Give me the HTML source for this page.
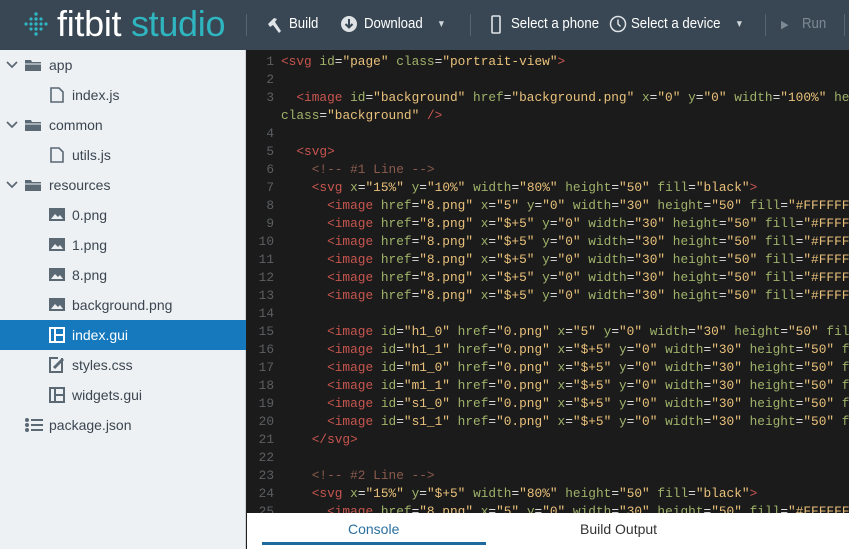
<!DOCTYPE html>
<html><head><meta charset="utf-8"><style>
*{margin:0;padding:0;box-sizing:border-box}
body{width:849px;height:549px;overflow:hidden;background:#1e1e1e;font-family:"Liberation Sans",sans-serif;position:relative}
#hdr{position:absolute;left:0;top:0;width:849px;height:50px;background:#384753;color:#fff}
.logo{position:absolute;left:57px;top:4px;font-size:36px;line-height:40px;letter-spacing:-0.3px}
.logo span{color:#2fb5c0}
.hi{position:absolute;top:15px;font-size:15px;color:#fff;white-space:nowrap;transform:scaleX(0.88);transform-origin:left center}
.sep{position:absolute;top:14px;width:1px;height:22px;background:#56656f}
#side{position:absolute;left:0;top:50px;width:246px;height:499px;background:#eef1f4;border-right:1px solid #cdd3d8}
.row{position:absolute;left:0;width:246px;height:30px;font-size:14px;color:#3b4650;line-height:30px}
.row.sel{background:#1679bd;color:#fff}
.row svg{position:absolute;top:7px}
#ed{position:absolute;left:247px;top:50px;width:602px;height:463px;background:#1b1b1b;font-family:"Liberation Mono",monospace;font-size:12.8px;overflow:hidden;padding-top:3px}
.l{height:18px;line-height:18px;white-space:pre;position:relative}
.n{display:inline-block;width:27px;text-align:right;color:#5c5f62;margin-right:7px}
.t{color:#c8554f}.a{color:#9fb36a}.s{color:#e9c17a}.c{color:#8a5b4d}.p{color:#ddd}
#bot{position:absolute;left:247px;top:513px;width:602px;height:36px;background:#fff;font-size:14px;color:#333}
</style></head><body>
<div id="hdr">
<svg style="position:absolute;left:22px;top:10px" width="30" height="30" viewBox="0 0 30 30" fill="#2fb5c0">
<circle cx="4" cy="14" r="1.6"/>
<circle cx="9" cy="9" r="1.6"/><circle cx="9" cy="14" r="1.6"/><circle cx="9" cy="19" r="1.6"/>
<circle cx="14" cy="4" r="1.7"/><circle cx="14" cy="9" r="1.7"/><circle cx="14" cy="14" r="1.7"/><circle cx="14" cy="19" r="1.7"/><circle cx="14" cy="24" r="1.7"/>
<circle cx="19" cy="9" r="1.6"/><circle cx="19" cy="14" r="1.6"/><circle cx="19" cy="19" r="1.6"/>
<circle cx="24" cy="14" r="1.6"/>
</svg>
<div class="logo">fitbit <span>studio</span></div>
<div class="sep" style="left:246px"></div>
<svg style="position:absolute;left:265px;top:16px" width="18" height="18" viewBox="0 0 18 18" fill="#dfe3e6"><path d="M3 8 L9 2 L12 3 L10 6 L16 15 L14 17 L8 9 L5 11 Z"/></svg>
<div class="hi" style="left:289px">Build</div>
<svg style="position:absolute;left:340px;top:15px" width="18" height="18" viewBox="0 0 18 18"><circle cx="9" cy="9" r="8" fill="#dfe3e6"/><path d="M9 4 V12 M5.5 9 L9 12.5 L12.5 9" stroke="#384753" stroke-width="2" fill="none"/></svg>
<div class="hi" style="left:364px">Download</div>
<div class="hi" style="left:437px;font-size:10px;top:19px;color:#cfd5d9">▼</div>
<div class="sep" style="left:470px"></div>
<svg style="position:absolute;left:491px;top:15px" width="10" height="19" viewBox="0 0 10 19"><rect x="1" y="1" width="8" height="17" rx="1" fill="none" stroke="#dfe3e6" stroke-width="1.6"/></svg>
<div class="hi" style="left:511px">Select a phone</div>
<svg style="position:absolute;left:609px;top:15px" width="18" height="18" viewBox="0 0 18 18"><circle cx="9" cy="9" r="7.5" fill="none" stroke="#dfe3e6" stroke-width="1.5"/><path d="M9 4.5 V9 L11.5 11.5" stroke="#dfe3e6" stroke-width="1.5" fill="none"/></svg>
<div class="hi" style="left:631px">Select a device</div>
<div class="hi" style="left:735px;font-size:10px;top:19px;color:#cfd5d9">▼</div>
<div class="sep" style="left:765px"></div>
<div class="hi" style="left:781px;color:#7d8a94;font-size:11px;top:18px">▶</div>
<div class="hi" style="left:802px;color:#7d8a94">Run</div>
<div class="sep" style="left:844px"></div>
</div>

<div id="side">
<div class="row" style="top:0"><svg style="left:6px;top:11px" width="12" height="8"><path d="M1 1 L6 6 L11 1" stroke="#5b6975" stroke-width="1.8" fill="none"/></svg><svg style="left:25px;top:9px" width="17" height="13"><path d="M0 1 H6 L7 3 H16 V12 H0 Z" fill="#5b6975"/><path d="M0 5 H16" stroke="#eef1f4" stroke-width="1"/></svg><span style="position:absolute;left:49px">app</span></div>
<div class="row" style="top:30px"><svg style="left:50px" width="14" height="16"><path d="M1 1 H9 L13 5 V15 H1 Z" fill="none" stroke="#5b6975" stroke-width="1.6"/></svg><span style="position:absolute;left:72px">index.js</span></div>
<div class="row" style="top:60px"><svg style="left:6px;top:11px" width="12" height="8"><path d="M1 1 L6 6 L11 1" stroke="#5b6975" stroke-width="1.8" fill="none"/></svg><svg style="left:25px;top:9px" width="17" height="13"><path d="M0 1 H6 L7 3 H16 V12 H0 Z" fill="#5b6975"/><path d="M0 5 H16" stroke="#eef1f4" stroke-width="1"/></svg><span style="position:absolute;left:49px">common</span></div>
<div class="row" style="top:90px"><svg style="left:50px" width="14" height="16"><path d="M1 1 H9 L13 5 V15 H1 Z" fill="none" stroke="#5b6975" stroke-width="1.6"/></svg><span style="position:absolute;left:72px">utils.js</span></div>
<div class="row" style="top:120px"><svg style="left:6px;top:11px" width="12" height="8"><path d="M1 1 L6 6 L11 1" stroke="#5b6975" stroke-width="1.8" fill="none"/></svg><svg style="left:25px;top:9px" width="17" height="13"><path d="M0 1 H6 L7 3 H16 V12 H0 Z" fill="#5b6975"/><path d="M0 5 H16" stroke="#eef1f4" stroke-width="1"/></svg><span style="position:absolute;left:49px">resources</span></div>
<div class="row" style="top:150px"><svg style="left:49px;top:8px" width="16" height="13"><rect width="16" height="13" fill="#5b6975"/><path d="M2 11 L6 6 L9 9 L11 7 L14 11 Z" fill="#eef1f4"/></svg><span style="position:absolute;left:72px">0.png</span></div>
<div class="row" style="top:180px"><svg style="left:49px;top:8px" width="16" height="13"><rect width="16" height="13" fill="#5b6975"/><path d="M2 11 L6 6 L9 9 L11 7 L14 11 Z" fill="#eef1f4"/></svg><span style="position:absolute;left:72px">1.png</span></div>
<div class="row" style="top:210px"><svg style="left:49px;top:8px" width="16" height="13"><rect width="16" height="13" fill="#5b6975"/><path d="M2 11 L6 6 L9 9 L11 7 L14 11 Z" fill="#eef1f4"/></svg><span style="position:absolute;left:72px">8.png</span></div>
<div class="row" style="top:240px"><svg style="left:49px;top:8px" width="16" height="13"><rect width="16" height="13" fill="#5b6975"/><path d="M2 11 L6 6 L9 9 L11 7 L14 11 Z" fill="#eef1f4"/></svg><span style="position:absolute;left:72px">background.png</span></div>
<div class="row sel" style="top:270px"><svg style="left:49px" width="16" height="16"><rect x="1" y="1" width="14" height="14" fill="none" stroke="#fff" stroke-width="2"/><path d="M6 1 V15 M6 8 H15" stroke="#fff" stroke-width="2"/></svg><span style="position:absolute;left:72px">index.gui</span></div>
<div class="row" style="top:300px"><svg style="left:49px" width="16" height="16"><path d="M13 1 V15 H1 V1 H9" fill="none" stroke="#5b6975" stroke-width="2"/><path d="M5 11 L14 2" stroke="#5b6975" stroke-width="3"/></svg><span style="position:absolute;left:72px">styles.css</span></div>
<div class="row" style="top:330px"><svg style="left:49px" width="16" height="16"><rect x="1" y="1" width="14" height="14" fill="none" stroke="#5b6975" stroke-width="2"/><path d="M6 1 V15 M6 8 H15" stroke="#5b6975" stroke-width="2"/></svg><span style="position:absolute;left:72px">widgets.gui</span></div>
<div class="row" style="top:360px"><svg style="left:25px;top:8px" width="18" height="14" fill="#5b6975"><circle cx="2" cy="2" r="2"/><circle cx="2" cy="7" r="2"/><circle cx="2" cy="12" r="2"/><rect x="6" y="1" width="12" height="2"/><rect x="6" y="6" width="12" height="2"/><rect x="6" y="11" width="12" height="2"/></svg><span style="position:absolute;left:49px">package.json</span></div>
</div>

<div id="ed">
<div class="l"><span class="n">1</span><span class="t">&lt;svg</span> <span class="a">id</span><span class="p">=</span><span class="s">"page"</span> <span class="a">class</span><span class="p">=</span><span class="s">"portrait-view"</span><span class="t">&gt;</span></div>
<div class="l"><span class="n">2</span></div>
<div class="l"><span class="n">3</span>  <span class="t">&lt;image</span> <span class="a">id</span><span class="p">=</span><span class="s">"background"</span> <span class="a">href</span><span class="p">=</span><span class="s">"background.png"</span> <span class="a">x</span><span class="p">=</span><span class="s">"0"</span> <span class="a">y</span><span class="p">=</span><span class="s">"0"</span> <span class="a">width</span><span class="p">=</span><span class="s">"100%"</span> <span class="a">height</span><span class="p">=</span><span class="s">"100%"</span></div>
<div class="l"><span class="n"></span><span class="a">class</span><span class="p">=</span><span class="s">"background"</span> <span class="t">/&gt;</span></div>
<div class="l"><span class="n">4</span></div>
<div class="l"><span class="n">5</span>  <span class="t">&lt;svg&gt;</span></div>
<div class="l"><span class="n">6</span>    <span class="c">&lt;!-- #1 Line --&gt;</span></div>
<div class="l"><span class="n">7</span>    <span class="t">&lt;svg</span> <span class="a">x</span><span class="p">=</span><span class="s">"15%"</span> <span class="a">y</span><span class="p">=</span><span class="s">"10%"</span> <span class="a">width</span><span class="p">=</span><span class="s">"80%"</span> <span class="a">height</span><span class="p">=</span><span class="s">"50"</span> <span class="a">fill</span><span class="p">=</span><span class="s">"black"</span><span class="t">&gt;</span></div>
<div class="l"><span class="n">8</span>      <span class="t">&lt;image</span> <span class="a">href</span><span class="p">=</span><span class="s">"8.png"</span> <span class="a">x</span><span class="p">=</span><span class="s">"5"</span> <span class="a">y</span><span class="p">=</span><span class="s">"0"</span> <span class="a">width</span><span class="p">=</span><span class="s">"30"</span> <span class="a">height</span><span class="p">=</span><span class="s">"50"</span> <span class="a">fill</span><span class="p">=</span><span class="s">"#FFFFFF"</span></div>
<div class="l"><span class="n">9</span>      <span class="t">&lt;image</span> <span class="a">href</span><span class="p">=</span><span class="s">"8.png"</span> <span class="a">x</span><span class="p">=</span><span class="s">"$+5"</span> <span class="a">y</span><span class="p">=</span><span class="s">"0"</span> <span class="a">width</span><span class="p">=</span><span class="s">"30"</span> <span class="a">height</span><span class="p">=</span><span class="s">"50"</span> <span class="a">fill</span><span class="p">=</span><span class="s">"#FFFFFF"</span></div>
<div class="l"><span class="n">10</span>      <span class="t">&lt;image</span> <span class="a">href</span><span class="p">=</span><span class="s">"8.png"</span> <span class="a">x</span><span class="p">=</span><span class="s">"$+5"</span> <span class="a">y</span><span class="p">=</span><span class="s">"0"</span> <span class="a">width</span><span class="p">=</span><span class="s">"30"</span> <span class="a">height</span><span class="p">=</span><span class="s">"50"</span> <span class="a">fill</span><span class="p">=</span><span class="s">"#FFFFFF"</span></div>
<div class="l"><span class="n">11</span>      <span class="t">&lt;image</span> <span class="a">href</span><span class="p">=</span><span class="s">"8.png"</span> <span class="a">x</span><span class="p">=</span><span class="s">"$+5"</span> <span class="a">y</span><span class="p">=</span><span class="s">"0"</span> <span class="a">width</span><span class="p">=</span><span class="s">"30"</span> <span class="a">height</span><span class="p">=</span><span class="s">"50"</span> <span class="a">fill</span><span class="p">=</span><span class="s">"#FFFFFF"</span></div>
<div class="l"><span class="n">12</span>      <span class="t">&lt;image</span> <span class="a">href</span><span class="p">=</span><span class="s">"8.png"</span> <span class="a">x</span><span class="p">=</span><span class="s">"$+5"</span> <span class="a">y</span><span class="p">=</span><span class="s">"0"</span> <span class="a">width</span><span class="p">=</span><span class="s">"30"</span> <span class="a">height</span><span class="p">=</span><span class="s">"50"</span> <span class="a">fill</span><span class="p">=</span><span class="s">"#FFFFFF"</span></div>
<div class="l"><span class="n">13</span>      <span class="t">&lt;image</span> <span class="a">href</span><span class="p">=</span><span class="s">"8.png"</span> <span class="a">x</span><span class="p">=</span><span class="s">"$+5"</span> <span class="a">y</span><span class="p">=</span><span class="s">"0"</span> <span class="a">width</span><span class="p">=</span><span class="s">"30"</span> <span class="a">height</span><span class="p">=</span><span class="s">"50"</span> <span class="a">fill</span><span class="p">=</span><span class="s">"#FFFFFF"</span></div>
<div class="l"><span class="n">14</span></div>
<div class="l"><span class="n">15</span>      <span class="t">&lt;image</span> <span class="a">id</span><span class="p">=</span><span class="s">"h1_0"</span> <span class="a">href</span><span class="p">=</span><span class="s">"0.png"</span> <span class="a">x</span><span class="p">=</span><span class="s">"5"</span> <span class="a">y</span><span class="p">=</span><span class="s">"0"</span> <span class="a">width</span><span class="p">=</span><span class="s">"30"</span> <span class="a">height</span><span class="p">=</span><span class="s">"50"</span> <span class="a">fill</span></div>
<div class="l"><span class="n">16</span>      <span class="t">&lt;image</span> <span class="a">id</span><span class="p">=</span><span class="s">"h1_1"</span> <span class="a">href</span><span class="p">=</span><span class="s">"0.png"</span> <span class="a">x</span><span class="p">=</span><span class="s">"$+5"</span> <span class="a">y</span><span class="p">=</span><span class="s">"0"</span> <span class="a">width</span><span class="p">=</span><span class="s">"30"</span> <span class="a">height</span><span class="p">=</span><span class="s">"50"</span> <span class="a">fill</span></div>
<div class="l"><span class="n">17</span>      <span class="t">&lt;image</span> <span class="a">id</span><span class="p">=</span><span class="s">"m1_0"</span> <span class="a">href</span><span class="p">=</span><span class="s">"0.png"</span> <span class="a">x</span><span class="p">=</span><span class="s">"$+5"</span> <span class="a">y</span><span class="p">=</span><span class="s">"0"</span> <span class="a">width</span><span class="p">=</span><span class="s">"30"</span> <span class="a">height</span><span class="p">=</span><span class="s">"50"</span> <span class="a">fill</span></div>
<div class="l"><span class="n">18</span>      <span class="t">&lt;image</span> <span class="a">id</span><span class="p">=</span><span class="s">"m1_1"</span> <span class="a">href</span><span class="p">=</span><span class="s">"0.png"</span> <span class="a">x</span><span class="p">=</span><span class="s">"$+5"</span> <span class="a">y</span><span class="p">=</span><span class="s">"0"</span> <span class="a">width</span><span class="p">=</span><span class="s">"30"</span> <span class="a">height</span><span class="p">=</span><span class="s">"50"</span> <span class="a">fill</span></div>
<div class="l"><span class="n">19</span>      <span class="t">&lt;image</span> <span class="a">id</span><span class="p">=</span><span class="s">"s1_0"</span> <span class="a">href</span><span class="p">=</span><span class="s">"0.png"</span> <span class="a">x</span><span class="p">=</span><span class="s">"$+5"</span> <span class="a">y</span><span class="p">=</span><span class="s">"0"</span> <span class="a">width</span><span class="p">=</span><span class="s">"30"</span> <span class="a">height</span><span class="p">=</span><span class="s">"50"</span> <span class="a">fill</span></div>
<div class="l"><span class="n">20</span>      <span class="t">&lt;image</span> <span class="a">id</span><span class="p">=</span><span class="s">"s1_1"</span> <span class="a">href</span><span class="p">=</span><span class="s">"0.png"</span> <span class="a">x</span><span class="p">=</span><span class="s">"$+5"</span> <span class="a">y</span><span class="p">=</span><span class="s">"0"</span> <span class="a">width</span><span class="p">=</span><span class="s">"30"</span> <span class="a">height</span><span class="p">=</span><span class="s">"50"</span> <span class="a">fill</span></div>
<div class="l"><span class="n">21</span>    <span class="t">&lt;/svg&gt;</span></div>
<div class="l"><span class="n">22</span></div>
<div class="l"><span class="n">23</span>    <span class="c">&lt;!-- #2 Line --&gt;</span></div>
<div class="l"><span class="n">24</span>    <span class="t">&lt;svg</span> <span class="a">x</span><span class="p">=</span><span class="s">"15%"</span> <span class="a">y</span><span class="p">=</span><span class="s">"$+5"</span> <span class="a">width</span><span class="p">=</span><span class="s">"80%"</span> <span class="a">height</span><span class="p">=</span><span class="s">"50"</span> <span class="a">fill</span><span class="p">=</span><span class="s">"black"</span><span class="t">&gt;</span></div>
<div class="l"><span class="n">25</span>      <span class="t">&lt;image</span> <span class="a">href</span><span class="p">=</span><span class="s">"8.png"</span> <span class="a">x</span><span class="p">=</span><span class="s">"5"</span> <span class="a">y</span><span class="p">=</span><span class="s">"0"</span> <span class="a">width</span><span class="p">=</span><span class="s">"30"</span> <span class="a">height</span><span class="p">=</span><span class="s">"50"</span> <span class="a">fill</span><span class="p">=</span><span class="s">"#FFFFFF"</span></div>
</div>

<div id="bot">
<div style="position:absolute;left:101px;top:8px;color:#2a6f9e">Console</div>
<div style="position:absolute;left:15px;top:29px;width:224px;height:3px;background:#1f6a9c"></div>
<div style="position:absolute;left:333px;top:8px">Build Output</div>
</div>
</body></html>
